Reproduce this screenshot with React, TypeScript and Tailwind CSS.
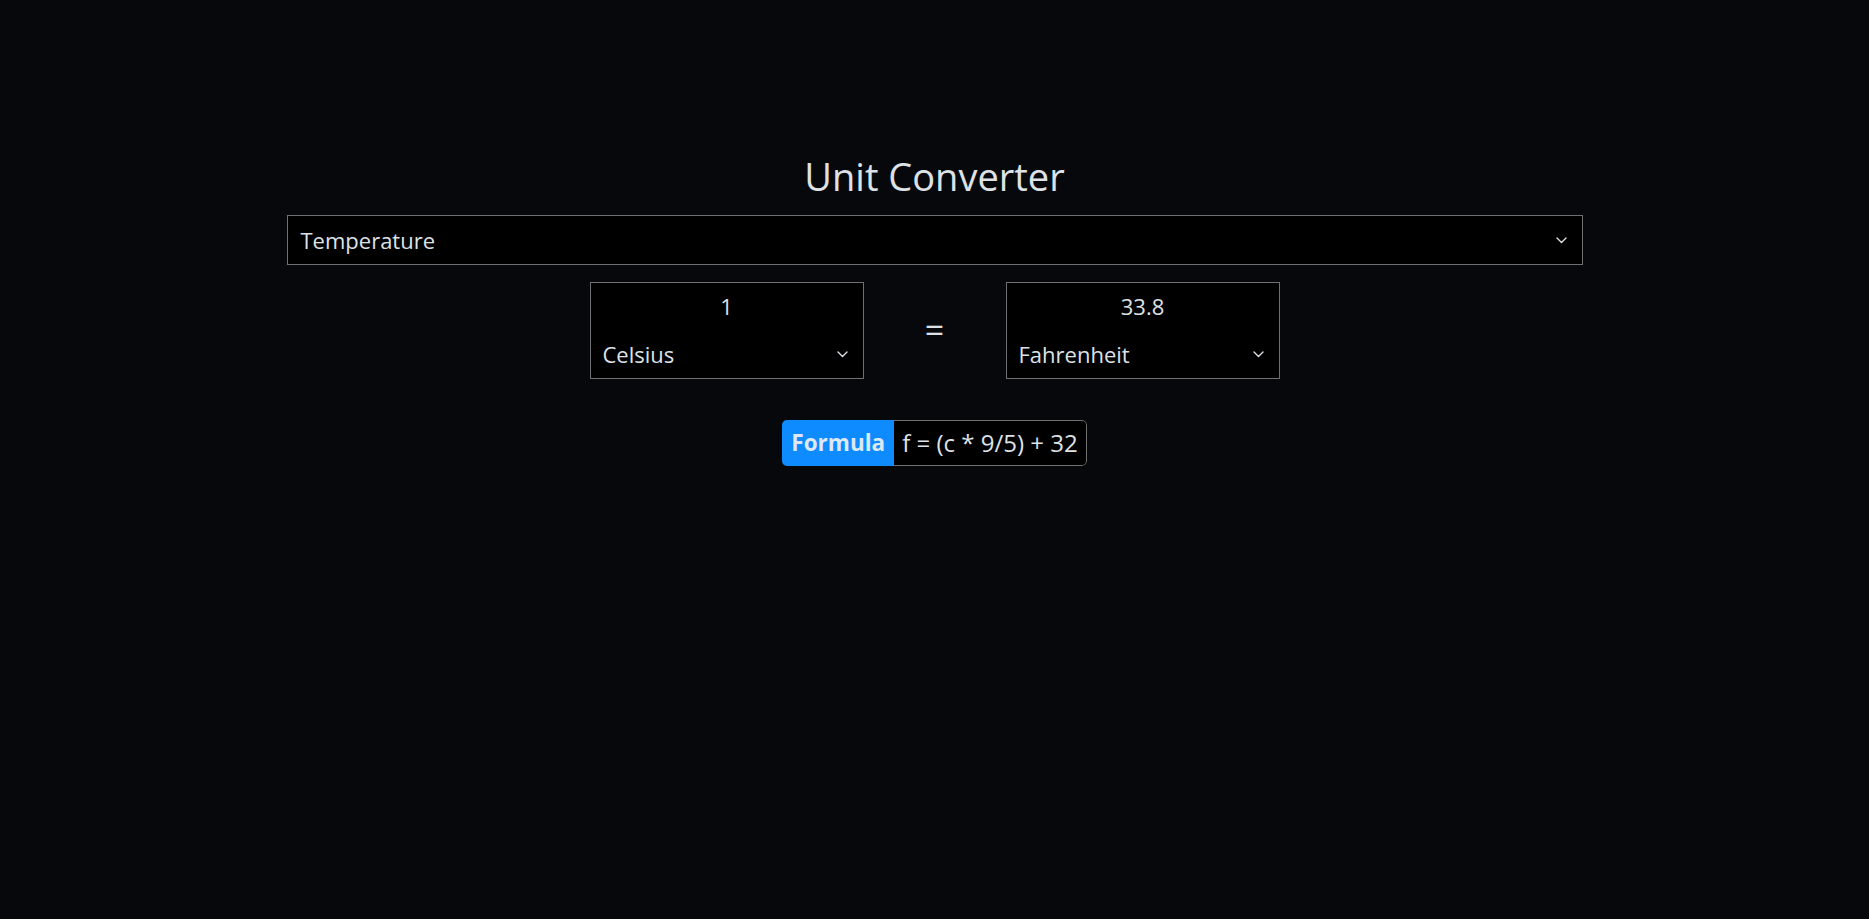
import React from "react";

function Chevron() {
  return (
    <svg width="11" height="7" viewBox="0 0 11 7" fill="none" className="shrink-0">
      <polyline points="1,1 5.5,5.5 10,1" stroke="#dee2e6" strokeWidth="1.4" strokeLinecap="round" strokeLinejoin="round" />
    </svg>
  );
}

function UnitBox({ value, unit }: { value: string; unit: string }) {
  return (
    <div className="w-[274px] h-[97px] border border-[#707070] bg-black flex flex-col">
      <div className="h-[47px] flex items-center justify-center text-[22px]">{value}</div>
      <div className="h-[48px] flex items-center justify-between pl-[12px] pr-[15px] text-[22px]">
        <span>{unit}</span>
        <Chevron />
      </div>
    </div>
  );
}

export default function App() {
  return (
    <div
      className="min-h-screen bg-[#07080b] text-[#dee2e6]"
      style={{ fontFamily: '"Open Sans", "Noto Sans", sans-serif' }}
    >
      <div className="mx-auto w-[1296px] pt-[153px]">
        <h1 className="text-center text-[38px] leading-[46px] font-normal mb-[16px]">Unit Converter</h1>
        <div className="h-[50px] border border-[#707070] bg-black flex items-center justify-between pl-[13px] pr-[15px] text-[22px]">
          <span>Temperature</span>
          <Chevron />
        </div>
        <div className="mt-[17px] flex justify-center items-center">
          <UnitBox value="1" unit="Celsius" />
          <div className="w-[142px] flex items-center justify-center text-[34px] leading-none pb-[2px]">=</div>
          <UnitBox value="33.8" unit="Fahrenheit" />
        </div>
        <div className="mt-[41px] flex justify-center">
          <div className="flex h-[46px] rounded-[5px] overflow-hidden">
            <div className="bg-[#0d8bff] text-[#dde8f3] font-bold text-[22.5px] px-[9px] flex items-center">Formula</div>
            <div className="bg-black border border-l-0 border-[#707070] rounded-r-[5px] text-[24px] px-[8px] flex items-center">
              f = (c * 9/5) + 32
            </div>
          </div>
        </div>
      </div>
    </div>
  );
}
